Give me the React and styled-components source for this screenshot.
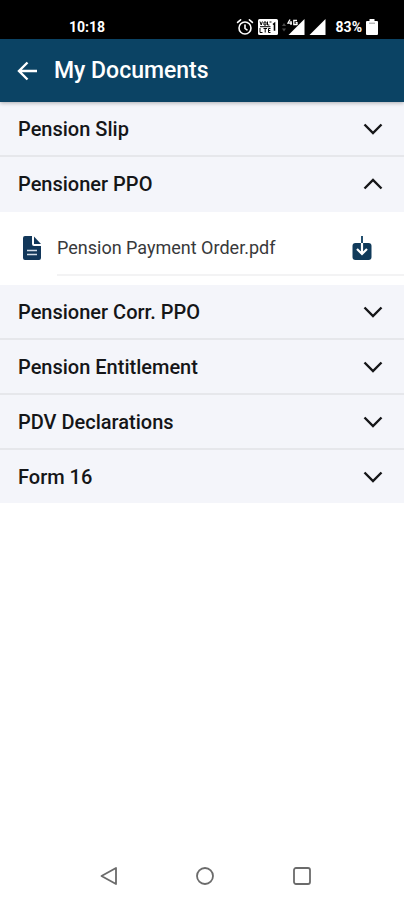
import React, { useState } from 'react';
import styled, { createGlobalStyle } from 'styled-components';

const GlobalStyle = createGlobalStyle`
  * {
    box-sizing: border-box;
  }

  body {
    margin: 0;
    background: #fff;
    font-family: Roboto, 'Liberation Sans', sans-serif;
  }

  button {
    font-family: inherit;
    border: 0;
    padding: 0;
    background: none;
    cursor: pointer;
  }

  svg {
    display: block;
    flex-shrink: 0;
  }
`;

const Screen = styled.div`
  min-height: 100vh;
  display: flex;
  flex-direction: column;
`;

const StatusBar = styled.div`
  height: 39px;
  display: flex;
  align-items: center;
  justify-content: space-between;
  padding: 14px 26px 0 69px;
  background: #000;
  color: #fff;
  font-size: 14px;
  line-height: 16px;
  font-weight: 700;
`;

const StatusIcons = styled.div`
  display: flex;
  align-items: center;
  gap: 4px;
`;

const Battery = styled.span`
  display: flex;
  align-items: center;
  gap: 4px;
  margin-left: 6px;
`;

const Header = styled.header`
  position: relative;
  height: 63px;
  display: flex;
  align-items: center;
  gap: 16px;
  padding: 0 16px;
  background: #0b4364;
  color: #fff;
  box-shadow: 0 1px 4px rgba(0, 0, 0, 0.3);
`;

const Title = styled.h1`
  margin: 0;
  font-size: 23px;
  line-height: 28px;
  font-weight: 500;
`;

const BackButton = styled.button`
  color: #fff;
`;

const Main = styled.main`
  flex: 1;
`;

const Section = styled.section`
  background: #f4f5fa;
`;

const SectionHeading = styled.h2`
  margin: 0;
  border-bottom: 2px solid ${({ $open }) => ($open ? 'transparent' : '#e6e7eb')};

  ${Section}:last-child & {
    border-bottom: 0;
  }
`;

const SectionButton = styled.button`
  width: 100%;
  height: 53px;
  display: flex;
  align-items: center;
  justify-content: space-between;
  padding: 0 20px 0 18px;
  color: #151618;
  font-size: 20px;
  line-height: 24px;
  font-weight: 500;
  text-align: left;
`;

const FileList = styled.ul`
  margin: 0;
  padding: 0 0 9px;
  list-style: none;
  background: #fff;
`;

const FileRow = styled.li`
  display: flex;
  align-items: center;
  padding-left: 20px;
  gap: 13px;
`;

const FileBody = styled.div`
  flex: 1;
  height: 64px;
  display: flex;
  align-items: center;
  justify-content: space-between;
  padding: 10px 30px 0 0;
  border-bottom: 2px solid #f3f3f4;
`;

const FileIconBox = styled.span`
  padding-top: 8px;
`;

const FileName = styled.span`
  color: #38393b;
  font-size: 18px;
  line-height: 24px;
`;

const NavBar = styled.nav`
  height: 48px;
  display: grid;
  grid-template-columns: repeat(3, 1fr);
  padding: 0 54px 0 61px;
`;

const NavButton = styled.button`
  display: flex;
  align-items: center;
  justify-content: center;
`;

const AlarmIcon = () => (
  <svg width="18" height="18" viewBox="0 0 18 18" fill="none" stroke="#fff" strokeWidth="1.6" strokeLinecap="round">
    <circle cx="9" cy="10" r="6" />
    <path d="M9 7v3.4l2 1.4M1.6 4.4l3-2.6M16.4 4.4l-3-2.6" />
  </svg>
);

const VolteIcon = () => (
  <svg width="20" height="16" viewBox="0 0 20 16">
    <rect width="20" height="16" rx="1.5" fill="#fff" />
    <path
      d="M2 2.5l1.2 3.5 1.2-3.5M6 3h2v3H6zM9.5 2.5V6h1.8M2 9v4.5h2.5M5.5 9.5h3.5M7.2 9.5v4M12.5 9.5h-2v4h2M10.5 11.5h1.8M2 7.7h10.5M11.5 3h2"
      fill="none"
      stroke="#000"
      strokeWidth="1"
    />
    <path d="M15 5.5l1.5-1.2v7.5" fill="none" stroke="#000" strokeWidth="1.6" />
  </svg>
);

const MobileSignalIcon = () => (
  <svg width="23" height="18" viewBox="0 0 23 18">
    <path d="M0 8l2-3 2 3zM0 10.5h4l-2 3z" fill="#4a4a4a" />
    <path d="M22.5 1v16h-16z" fill="#fff" />
    <path d="M5 1h11v7H5z" fill="#000" />
    <path d="M8 1.5L6 5.2h4M9 3v4M15 2.5h-3.2v4H15V4.6h-1.4" fill="none" stroke="#fff" strokeWidth="1.3" />
  </svg>
);

const SignalIcon = () => (
  <svg width="17" height="18" viewBox="0 0 17 18">
    <path d="M16.5 1v16H.5z" fill="#fff" />
  </svg>
);

const BatteryIcon = () => (
  <svg width="12" height="18" viewBox="0 0 12 18" fill="#fff">
    <path d="M3.5 1h5v2H11q1 0 1 1v12q0 1-1 1H1q-1 0-1-1V4q0-1 1-1h2.5z" />
    <path d="M3 5.2h6" stroke="#999" strokeWidth="1" />
  </svg>
);

const BackIcon = () => (
  <svg width="22" height="22" viewBox="0 0 22 22" fill="none" stroke="currentColor" strokeWidth="2.4">
    <path d="M21 11H3.5M11.5 2.5L3 11l8.5 8.5" />
  </svg>
);

const Chevron = ({ open }) => (
  <svg width="22" height="14" viewBox="0 0 22 14" fill="none" stroke="#151618" strokeWidth="2.4">
    <path d={open ? 'M2.500 11.500L11 3l8.500 8.500' : 'M2.500 2.500L11 11l8.500-8.500'} />
  </svg>
);

const DocumentIcon = () => (
  <svg width="24" height="24" viewBox="0 0 24 24" fill="#12375a">
    <path d="M5 0h7v8q0 2 2 2h7v12q0 2-2 2H5q-2 0-2-2V2q0-2 2-2z" />
    <path d="M14 .5L21 8h-7z" />
    <path d="M7 14.5h10M7 18.5h10" stroke="#d5dee8" strokeWidth="1.7" />
  </svg>
);

const DownloadIcon = () => (
  <svg width="24" height="26" viewBox="0 0 24 26" fill="none">
    <rect x="2.5" y="8" width="19" height="17" rx="3" fill="#103a5a" />
    <path d="M12 1v8" stroke="#24506f" strokeWidth="2" />
    <path d="M12 8v11M7 14l5 5 5-5" stroke="#fff" strokeWidth="2.2" />
  </svg>
);

const sections = [
  { title: 'Pension Slip', files: [] },
  { title: 'Pensioner PPO', files: ['Pension Payment Order.pdf'] },
  { title: 'Pensioner Corr. PPO', files: [] },
  { title: 'Pension Entitlement', files: [] },
  { title: 'PDV Declarations', files: [] },
  { title: 'Form 16', files: [] },
];

const DocumentSection = ({ section, open, onToggle }) => (
  <Section>
    <SectionHeading $open={open}>
      <SectionButton type="button" aria-expanded={open} onClick={onToggle}>
        {section.title}
        <Chevron open={open} />
      </SectionButton>
    </SectionHeading>
    {open && section.files.length > 0 && (
      <FileList>
        {section.files.map((file) => (
          <FileRow key={file}>
            <FileIconBox>
              <DocumentIcon />
            </FileIconBox>
            <FileBody>
              <FileName>{file}</FileName>
              <button type="button" aria-label={`Download ${file}`}>
                <DownloadIcon />
              </button>
            </FileBody>
          </FileRow>
        ))}
      </FileList>
    )}
  </Section>
);

const App = () => {
  const [openIndex, setOpenIndex] = useState(1);

  return (
    <>
      <GlobalStyle />
      <Screen>
        <StatusBar>
          <span>10:18</span>
          <StatusIcons>
            <AlarmIcon />
            <VolteIcon />
            <MobileSignalIcon />
            <SignalIcon />
            <Battery>
              83%
              <BatteryIcon />
            </Battery>
          </StatusIcons>
        </StatusBar>

        <Header>
          <BackButton type="button" aria-label="Back">
            <BackIcon />
          </BackButton>
          <Title>My Documents</Title>
        </Header>

        <Main>
          {sections.map((section, index) => (
            <DocumentSection
              key={section.title}
              section={section}
              open={openIndex === index}
              onToggle={() => setOpenIndex(openIndex === index ? -1 : index)}
            />
          ))}
        </Main>

        <NavBar aria-label="System">
          <NavButton type="button" aria-label="Back">
            <svg width="20" height="20" viewBox="0 0 20 20" fill="none" stroke="#6b6b6b" strokeWidth="1.8" strokeLinejoin="round">
              <path d="M17 2v16L2.5 10z" />
            </svg>
          </NavButton>
          <NavButton type="button" aria-label="Home">
            <svg width="20" height="20" viewBox="0 0 20 20" fill="none" stroke="#6b6b6b" strokeWidth="1.8">
              <circle cx="10" cy="10" r="8" />
            </svg>
          </NavButton>
          <NavButton type="button" aria-label="Recent apps">
            <svg width="20" height="20" viewBox="0 0 20 20" fill="none" stroke="#6b6b6b" strokeWidth="1.8">
              <rect x="2" y="2" width="16" height="16" rx="2" />
            </svg>
          </NavButton>
        </NavBar>
      </Screen>
    </>
  );
};

export default App;
